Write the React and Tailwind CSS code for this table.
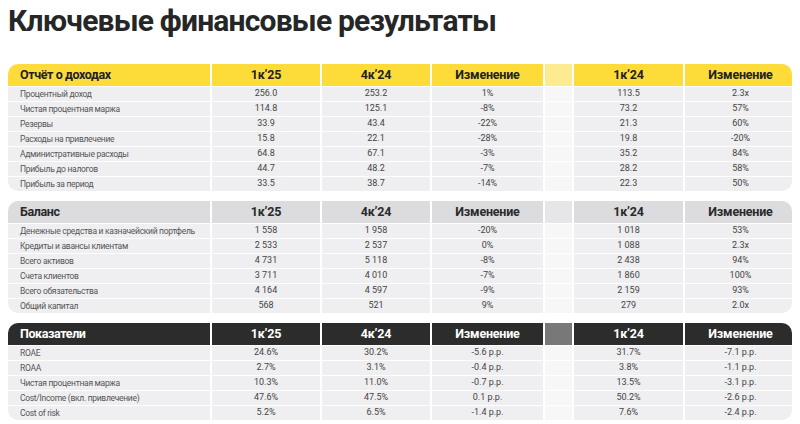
import React from 'react'

const income = [
  ['Процентный доход', '256.0', '253.2', '1%', '113.5', '2.3x'],
  ['Чистая процентная маржа', '114.8', '125.1', '-8%', '73.2', '57%'],
  ['Резервы', '33.9', '43.4', '-22%', '21.3', '60%'],
  ['Расходы на привлечение', '15.8', '22.1', '-28%', '19.8', '-20%'],
  ['Административные расходы', '64.8', '67.1', '-3%', '35.2', '84%'],
  ['Прибыль до налогов', '44.7', '48.2', '-7%', '28.2', '58%'],
  ['Прибыль за период', '33.5', '38.7', '-14%', '22.3', '50%'],
]

const balance = [
  ['Денежные средства и казначейский портфель', '1 558', '1 958', '-20%', '1 018', '53%'],
  ['Кредиты и авансы клиентам', '2 533', '2 537', '0%', '1 088', '2.3x'],
  ['Всего активов', '4 731', '5 118', '-8%', '2 438', '94%'],
  ['Счета клиентов', '3 711', '4 010', '-7%', '1 860', '100%'],
  ['Всего обязательства', '4 164', '4 597', '-9%', '2 159', '93%'],
  ['Общий капитал', '568', '521', '9%', '279', '2.0x'],
]

const ratios = [
  ['ROAE', '24.6%', '30.2%', '-5.6 p.p.', '31.7%', '-7.1 p.p.'],
  ['ROAA', '2.7%', '3.1%', '-0.4 p.p.', '3.8%', '-1.1 p.p.'],
  ['Чистая процентная маржа', '10.3%', '11.0%', '-0.7 p.p.', '13.5%', '-3.1 p.p.'],
  ['Cost/Income (вкл. привлечение)', '47.6%', '47.5%', '0.1 p.p.', '50.2%', '-2.6 p.p.'],
  ['Cost of risk', '5.2%', '6.5%', '-1.4 p.p.', '7.6%', '-2.4 p.p.'],
]

const themes = {
  yellow: { head: 'bg-[#fddc3a] text-[#222]', spacer: 'bg-[#fdeb92]' },
  gray: { head: 'bg-[#dcdcdf] text-[#2a2a2a]', spacer: 'bg-[#e6e6e8]' },
  dark: { head: 'bg-[#2c2c2c] text-white', spacer: 'bg-[#787878]' },
}

function Table({ title, rows, theme }) {
  const t = themes[theme]
  const heads = ['1к\u201925', '4к\u201924', 'Изменение']
  const hc = `${t.head} h-[22px] flex items-center justify-center text-[12.5px] font-bold tracking-[-0.2px]`
  const dc = 'bg-[#efeff1] h-[14px] flex items-center justify-center text-[9px] text-[#444]'
  return (
    <div className="rounded-[10px] overflow-hidden grid grid-cols-[202px_108px_108px_111px_27px_109px_111px] gap-x-[2px] gap-y-[1px]">
      <div className={`${t.head} h-[22px] flex items-center pl-3 text-[12.5px] font-bold tracking-[-0.4px]`}>{title}</div>
      {heads.map((h) => (
        <div key={h} className={hc}>{h}</div>
      ))}
      <div className={`${t.spacer} h-[22px]`}></div>
      <div className={hc}>1к’24</div>
      <div className={hc}>Изменение</div>
      {rows.map((r, i) => (
        <React.Fragment key={i}>
          <div className="bg-[#efeff1] h-[14px] flex items-center pl-3 text-[8.5px] tracking-[-0.3px] text-[#555] whitespace-nowrap">{r[0]}</div>
          <div className={dc}>{r[1]}</div>
          <div className={dc}>{r[2]}</div>
          <div className={dc}>{r[3]}</div>
          <div className="bg-[#f7f7f8] h-[14px]"></div>
          <div className={dc}>{r[4]}</div>
          <div className={dc}>{r[5]}</div>
        </React.Fragment>
      ))}
    </div>
  )
}

export default function App() {
  return (
    <div className="w-[800px] h-[424px] bg-white px-2 overflow-hidden" style={{ fontFamily: 'Roboto, "Noto Sans", sans-serif' }}>
      <h1 className="text-[30px] leading-[40px] font-bold text-[#262626] pt-[1px] h-[64px] tracking-[-0.8px]">Ключевые финансовые результаты</h1>
      <div className="flex flex-col gap-[10px]">
        <Table title="Отчёт о доходах" rows={income} theme="yellow" />
        <Table title="Баланс" rows={balance} theme="gray" />
        <Table title="Показатели" rows={ratios} theme="dark" />
      </div>
    </div>
  )
}
